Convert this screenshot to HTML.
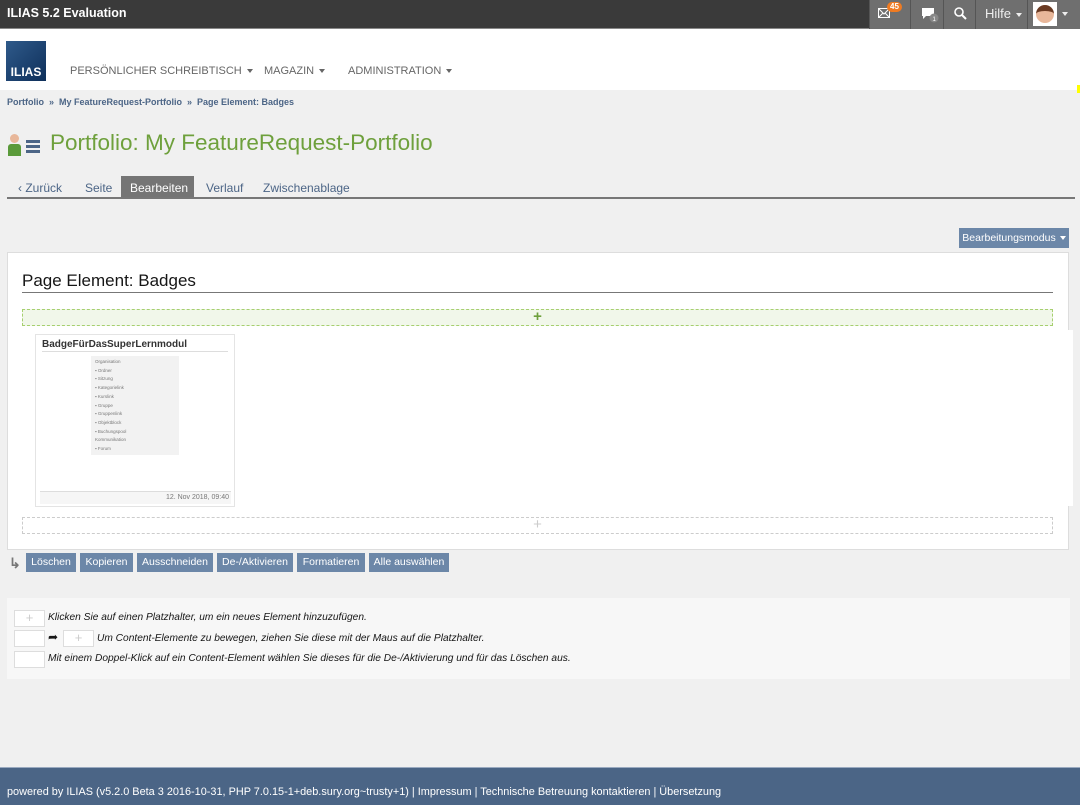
<!DOCTYPE html>
<html><head><meta charset="utf-8"><style>
*{box-sizing:border-box;margin:0;padding:0}
body{width:1080px;height:805px;background:#f0f0f0;font-family:"Liberation Sans",sans-serif;position:relative;overflow:hidden;color:#161616}
.abs{position:absolute;white-space:nowrap}
.top{left:0;top:0;width:1080px;height:29px;background:#3a3a3a;border-bottom:1px solid #888}
.top .t{left:7px;top:6px;color:#fff;font-weight:bold;font-size:12.5px}
.tb{top:0;height:29px;background:#6f6f6f;border-left:1px solid #555;color:#eee;font-size:13px}
.nav{left:0;top:29px;width:1080px;height:61px;background:#fff}
.logo{left:6px;top:41px;width:40px;height:40px;background:linear-gradient(135deg,#2f5a8a,#0e2f5a);color:#fff;font-weight:bold;font-size:12px;text-align:center;padding-top:24px}
.menu{top:65px;color:#666;font-size:11px}
.car{display:inline-block;border-left:3.5px solid transparent;border-right:3.5px solid transparent;border-top:4px solid #666;vertical-align:middle;margin-left:5px}
.bc{left:7px;top:97px;font-size:9px;color:#4c6586;font-weight:bold}
h1{position:absolute;left:50px;top:130px;font-weight:normal;font-size:22.5px;color:#6ea03c;white-space:nowrap}
.tabs{top:181px;font-size:12px;color:#4c6586}
.tabline{left:7px;top:197px;width:1068px;height:2px;background:#777}
.btn{background:#6c87a8;color:#fff;font-size:10.5px;height:19px;line-height:19px;position:absolute;text-align:center;white-space:nowrap}
.panel{left:7px;top:252px;width:1062px;height:298px;background:#fff;border:1px solid #ddd}
.ph{font-size:17px;left:22px;top:271px}
.dash{border:1px dashed #ccc}
.legend{left:7px;top:598px;width:1063px;height:81px;background:#f7f7f7}
.lg{font-style:italic;font-size:10.2px;position:absolute;left:48px;white-space:nowrap}
.box{position:absolute;width:31px;height:17px;border:1px solid #ddd;background:#fff}
.foot{left:0;top:767px;width:1080px;height:38px;background:#4b6586;border-top:1px solid #9aaac0;color:#fff;font-size:10.9px;padding:18px 0 0 7px;white-space:nowrap}
</style></head><body>
<div class="abs top"><div class="abs t">ILIAS 5.2 Evaluation</div></div>
<div class="abs tb" style="left:869px;width:41px"><svg class="abs" style="left:8px;top:8px" width="12" height="10"><rect x="0.5" y="0.5" width="11" height="9" fill="none" stroke="#fff"/><path d="M1 1L6 6L11 1M1 9L5 5M11 9L7 5" stroke="#fff" fill="none"/></svg><div class="abs" style="left:17px;top:2px;background:#f07b22;color:#fff;font-size:8px;font-weight:bold;border-radius:7px;padding:0 3px;line-height:10px">45</div></div>
<div class="abs tb" style="left:910px;width:33px"><svg class="abs" style="left:10px;top:7px" width="18" height="16"><path d="M1 1h12v8h-8l-3 3v-3h-1z" fill="#fff"/><circle cx="13" cy="11" r="4.5" fill="#888"/><text x="11.5" y="14" font-size="6" fill="#fff" font-family="Liberation Sans">1</text></svg></div>
<div class="abs tb" style="left:943px;width:32px"><svg class="abs" style="left:10px;top:7px" width="13" height="13"><circle cx="5" cy="5" r="4" stroke="#fff" stroke-width="1.6" fill="none"/><path d="M8 8l4 4" stroke="#fff" stroke-width="2"/></svg></div>
<div class="abs tb" style="left:975px;width:52px;padding:6px 0 0 9px">Hilfe<span class="car" style="border-top-color:#eee"></span></div>
<div class="abs tb" style="left:1027px;width:53px"><div class="abs" style="left:5px;top:2px;width:24px;height:24px;background:#fff"><div class="abs" style="left:3px;top:3px;width:18px;height:18px;border-radius:50%;background:#e8b79a;border-top:6px solid #6a3a22"></div></div><span class="car abs" style="left:29px;top:12px;border-top-color:#eee"></span></div>
<div class="abs nav"></div>
<div class="abs logo">ILIAS</div>
<div class="abs menu" style="left:70px">PERSÖNLICHER SCHREIBTISCH<span class="car"></span></div>
<div class="abs menu" style="left:264px">MAGAZIN<span class="car"></span></div>
<div class="abs menu" style="left:348px">ADMINISTRATION<span class="car"></span></div>
<div class="abs" style="left:1077px;top:85px;width:3px;height:8px;background:#ff0"></div>
<div class="abs bc">Portfolio &nbsp;»&nbsp; My FeatureRequest-Portfolio &nbsp;»&nbsp; Page Element: Badges</div>
<div class="abs" style="left:10px;top:134px;width:9px;height:9px;border-radius:50%;background:#e8b79a"></div>
<div class="abs" style="left:8px;top:144px;width:13px;height:12px;border-radius:3px 3px 0 0;background:#5a9a3a"></div>
<div class="abs" style="left:26px;top:140px;width:14px;height:2.5px;background:#4c6586;box-shadow:0 5px 0 #4c6586,0 10px 0 #4c6586"></div>
<h1>Portfolio: My FeatureRequest-Portfolio</h1>
<div class="abs tabs" style="left:18px">&#x2039; Zurück</div>
<div class="abs tabs" style="left:85px">Seite</div>
<div class="abs" style="left:121px;top:176px;width:73px;height:21px;background:#757575;color:#fff;font-size:12px;padding:5px 0 0 9px">Bearbeiten</div>
<div class="abs tabs" style="left:206px">Verlauf</div>
<div class="abs tabs" style="left:263px">Zwischenablage</div>
<div class="abs tabline"></div>
<div class="btn" style="left:959px;top:228px;width:110px;height:20px;line-height:20px">Bearbeitungsmodus<span class="car" style="border-top-color:#fff;margin-left:4px"></span></div>
<div class="abs panel"></div>
<div class="abs" style="left:1065px;top:330px;width:8px;height:176px;background:#fff"></div>
<div class="abs ph">Page Element: Badges</div>
<div class="abs" style="left:22px;top:292px;width:1031px;height:1px;background:#777"></div>
<div class="abs" style="left:22px;top:309px;width:1031px;height:17px;background:#f1f7ea;border:1px dashed #a6cf6f;text-align:center;color:#6ea03c;font-weight:bold;font-size:15px;line-height:14px">+</div>
<div class="abs" style="left:35px;top:334px;width:200px;height:173px;border:1px solid #e4e4e4;background:#fff"></div>
<div class="abs" style="left:42px;top:339px;font-size:10px;font-weight:bold;color:#333">BadgeFürDasSuperLernmodul</div>
<div class="abs" style="left:42px;top:351px;width:186px;height:1px;background:#ddd"></div>
<div class="abs" style="left:91px;top:356px;width:88px;height:99px;background:#f2f2f2"></div>
<div class="abs" style="left:95px;top:358px;width:60px;font-size:4.5px;color:#777;line-height:8.7px">Organisation<br>▪ Ordner<br>▪ Sitzung<br>▪ Kategorielink<br>▪ Kurslink<br>▪ Gruppe<br>▪ Gruppenlink<br>▪ Objektblock<br>▪ Buchungspool<br>Kommunikation<br>▪ Forum</div>
<div class="abs" style="left:40px;top:491px;width:191px;height:13px;background:#f6f6f6;border-top:1px solid #ddd;font-size:7px;color:#777;text-align:right;padding:2px 2px 0 0">12. Nov 2018, 09:40</div>
<div class="abs dash" style="left:22px;top:517px;width:1031px;height:17px;text-align:center;color:#ccc;font-size:15px;line-height:14px">+</div>
<div class="abs" style="left:9px;top:555px;font-size:14px;color:#777;font-weight:bold">↳</div>
<div class="btn" style="left:26px;top:553px;width:50px">Löschen</div>
<div class="btn" style="left:80px;top:553px;width:53px">Kopieren</div>
<div class="btn" style="left:137px;top:553px;width:76px">Ausschneiden</div>
<div class="btn" style="left:217px;top:553px;width:76px">De-/Aktivieren</div>
<div class="btn" style="left:297px;top:553px;width:68px">Formatieren</div>
<div class="btn" style="left:369px;top:553px;width:80px">Alle auswählen</div>
<div class="abs legend"></div>
<div class="box dash" style="left:14px;top:610px;text-align:center;color:#ccc;font-size:13px;line-height:14px">+</div>
<div class="lg" style="top:612px">Klicken Sie auf einen Platzhalter, um ein neues Element hinzuzufügen.</div>
<div class="box" style="left:14px;top:630px"></div>
<div class="abs" style="left:48px;top:630px;font-size:12px">➦</div>
<div class="box dash" style="left:63px;top:630px;text-align:center;color:#ccc;font-size:13px;line-height:14px">+</div>
<div class="lg" style="top:633px;left:97px">Um Content-Elemente zu bewegen, ziehen Sie diese mit der Maus auf die Platzhalter.</div>
<div class="box" style="left:14px;top:651px"></div>
<div class="lg" style="top:653px">Mit einem Doppel-Klick auf ein Content-Element wählen Sie dieses für die De-/Aktivierung und für das Löschen aus.</div>
<div class="abs foot">powered by ILIAS (v5.2.0 Beta 3 2016-10-31, PHP 7.0.15-1+deb.sury.org~trusty+1) | Impressum | Technische Betreuung kontaktieren | Übersetzung</div>
</body></html>
